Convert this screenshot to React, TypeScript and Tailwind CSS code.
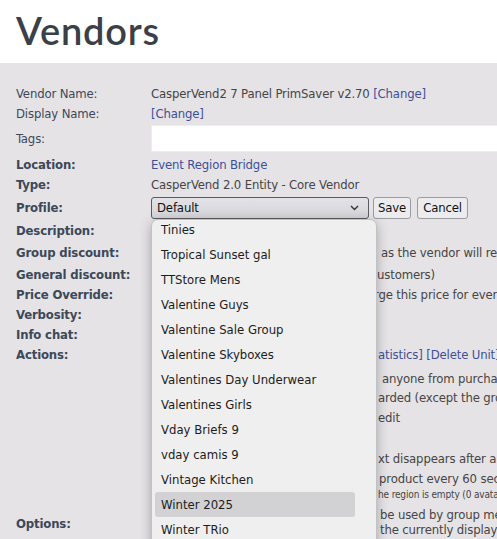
import React from 'react';

const bodyFont = { fontFamily: 'Tahoma, "DejaVu Sans Condensed", "DejaVu Sans", sans-serif' };

const profiles = [
  'Tinies',
  'Tropical Sunset gal',
  'TTStore Mens',
  'Valentine Guys',
  'Valentine Sale Group',
  'Valentine Skyboxes',
  'Valentines Day Underwear',
  'Valentines Girls',
  'Vday Briefs 9',
  'vday camis 9',
  'Vintage Kitchen',
  'Winter 2025',
  'Winter TRio',
  'Winter Wonderland',
];

// a line of the value column whose start is hidden under the open profile list
function Tail({ hidden, shown, w, className = '' }: { hidden: string; shown: string; w: string; className?: string }) {
  return (
    <div className={`flex whitespace-nowrap ${className}`}>
      <span className={`shrink-0 ${w}`}>
        <span className="block max-w-[224px] overflow-hidden">{hidden}</span>
      </span>
      <span>{shown}</span>
    </div>
  );
}

function Label({ children, bold = true, className = '' }: { children: React.ReactNode; bold?: boolean; className?: string }) {
  return (
    <div className={`w-[135px] shrink-0 text-[#3c4858] ${bold ? 'font-bold' : ''} ${className}`}>{children}</div>
  );
}

function ProfileSelect() {
  return (
    <div className="relative flex items-center gap-[4px]">
      <div className="flex h-[22px] w-[218px] items-center justify-between rounded-[3px] border border-[#5b5b60] bg-gradient-to-b from-[#e3e3e7] to-[#d4d4d9] pl-[5px] pr-[9px] text-[#111]">
        <span>Default</span>
        <svg width="9" height="6" viewBox="0 0 9 6" className="text-[#333]">
          <polyline points="1,1 4.5,4.5 8,1" fill="none" stroke="currentColor" strokeWidth="1.4" />
        </svg>
      </div>
      <button className="h-[22px] rounded-[3px] border border-[#9a9aa0] bg-[#ececef] px-[4px] text-[#111]">Save</button>
      <button className="ml-[2px] h-[22px] rounded-[3px] border border-[#9a9aa0] bg-[#ececef] px-[5px] text-[#111]">Cancel</button>

      <div className="absolute left-0 top-full z-10 h-[330px] w-[226px] overflow-hidden rounded-t-[7px] border border-[#c2c2c6] bg-[#efeff0] tracking-normal shadow-[0_3px_12px_rgba(0,0,0,0.28)]">
        <div className="-mt-[3px] pl-[3px]">
          {profiles.map(p => (
            <div
              key={p}
              className={`flex h-[25px] w-[200px] items-center rounded-[3px] pl-[6px] text-[#1c1c1c] ${p === 'Winter 2025' ? 'bg-[#d2d2d4]' : ''}`}
            >
              {p}
            </div>
          ))}
        </div>
      </div>
    </div>
  );
}

export default function App() {
  return (
    <div className="h-screen w-full overflow-hidden bg-[#e5e3e6] text-[13px] tracking-[-0.15px]" style={bodyFont}>
      <div className="flex h-[63px] items-start bg-white pl-4">
        <h1
          className="mt-[6px] text-[38px] font-semibold leading-[48px] tracking-[0.8px] text-[#3b3f47]"
          style={{ fontFamily: 'Lato, "Open Sans", sans-serif' }}
        >
          Vendors
        </h1>
      </div>

      <div className="px-4 pt-[21px] leading-5">
        <div className="flex">
          <Label bold={false}>Vendor Name:</Label>
          <div className="whitespace-nowrap text-[#454545]">
            CasperVend2 7 Panel PrimSaver v2.70 <a className="text-[#3d4f98]">[Change]</a>
          </div>
        </div>
        <div className="flex">
          <Label bold={false}>Display Name:</Label>
          <a className="text-[#3d4f98]">[Change]</a>
        </div>
        <div className="mt-[1px] flex items-center">
          <Label bold={false}>Tags:</Label>
          <input className="h-[27px] w-[400px] shrink-0 border border-[#eeeeee] bg-white outline-none" />
        </div>
        <div className="mt-[3px] flex">
          <Label>Location:</Label>
          <a className="text-[#3d4f98]">Event Region Bridge</a>
        </div>
        <div className="flex">
          <Label>Type:</Label>
          <div className="text-[#454545]">CasperVend 2.0 Entity - Core Vendor</div>
        </div>
        <div className="mt-[1px] flex h-[24px] items-center">
          <Label>Profile:</Label>
          <ProfileSelect />
        </div>
        <div className="mt-[1px] flex">
          <Label>Description:</Label>
          <div className="text-[#454545]">Seven panel vendor</div>
        </div>
        <div className="mt-[2px] flex text-[#454545]">
          <Label>Group discount:</Label>
          <Tail w="w-[230px]" hidden="0% - group members pay the same price," shown="as the vendor will receive the full price" />
        </div>
        <div className="mt-[2px] flex text-[#454545]">
          <Label>General discount:</Label>
          <Tail w="w-[226px]" hidden="0% (applies to all c" shown="ustomers)" />
        </div>
        <div className="flex text-[#454545]">
          <Label>Price Override:</Label>
          <Tail w="w-[223px]" hidden="None - when set, vendor will cha" shown="rge this price for every item" />
        </div>
        <div className="flex text-[#454545]">
          <Label>Verbosity:</Label>
          <div>Normal</div>
        </div>
        <div className="flex text-[#454545]">
          <Label>Info chat:</Label>
          <div>On</div>
        </div>
        <div className="flex text-[#454545]">
          <Label>Actions:</Label>
          <div>
            <Tail w="w-[227px]" hidden="[Refresh] [Reset] [View St" shown="atistics] [Delete Unit]" className="text-[#3d4f98]" />
            <Tail w="w-[231px]" hidden="[ ] Disable purchases - stops" shown="anyone from purchasing from this vendor" className="mt-[4px] leading-[19px]" />
            <Tail w="w-[227px]" hidden="[ ] Group only - nobody is rew" shown="arded (except the group members) with" />
            <Tail w="w-[227px]" hidden="commission or store cr" shown="edit" />
            <Tail w="w-[227px]" hidden="[ ] Hover text - hover te" shown="xt disappears after a while" className="mt-[21px]" />
            <Tail w="w-[228px]" hidden="[ ] Auto scroll - next" shown="product every 60 seconds" />
            <Tail w="w-[227px]" hidden="scrolling pauses while t" shown="he region is empty (0 avatars)" className="text-[10px] leading-[11px]" />
          </div>
        </div>
        <div className="mt-[6px] flex text-[#454545]">
          <Label className="mt-[8px]">Options:</Label>
          <div className="mt-[1px] leading-[15px]">
            <Tail w="w-[229px]" hidden="[ ] Group gifts - may only" shown="be used by group members" />
            <Tail w="w-[229px]" hidden="[ ] Show price - shows" shown="the currently displayed price" />
          </div>
        </div>
      </div>
    </div>
  );
}
